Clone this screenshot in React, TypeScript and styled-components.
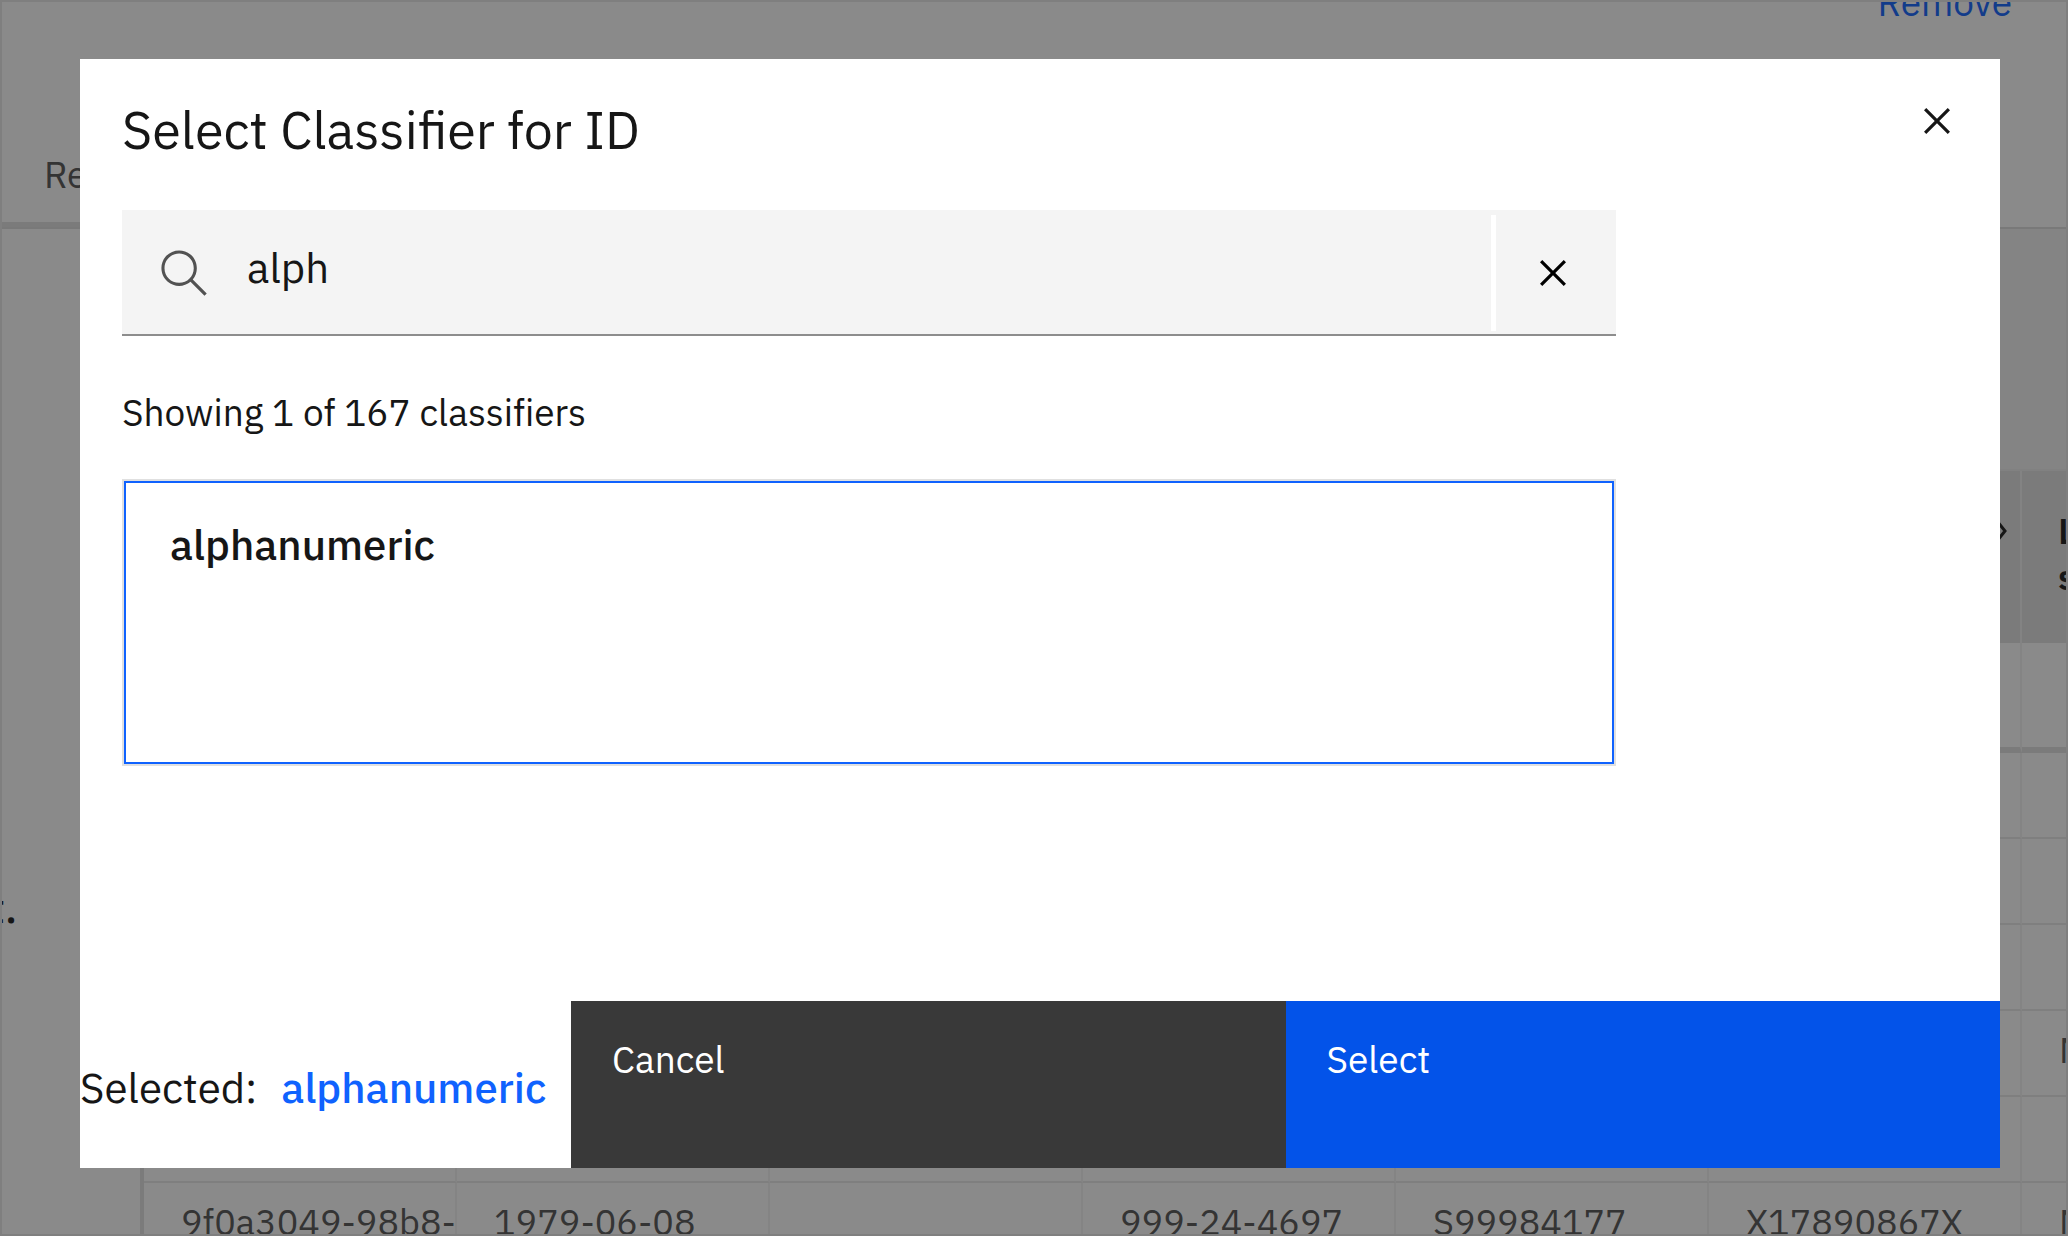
import React, { useState } from "react";
import styled, { createGlobalStyle } from "styled-components";

const color = {
  text: "#161616",
  textSoft: "#525252",
  layer: "#f4f4f4",
  line: "#e0e0e0",
  frame: "#e8e8e8",
  field: "#8d8d8d",
  blue: "#0f62fe",
  primary: "#0353e9",
  secondary: "#393939",
};

const GlobalStyle = createGlobalStyle`
  *, *::before, *::after { box-sizing: border-box; }
  body {
    margin: 0;
    color: ${color.text};
    font-family: "IBM Plex Sans", "Noto Sans", sans-serif;
    font-size: 37px;
    line-height: 48px;
  }
  button, input { font: inherit; color: inherit; border: 0; border-radius: 0; }
`;

const Page = styled.div`
  display: flex;
  flex-direction: column;
  height: 100vh;
  overflow: hidden;
  border: 2px solid ${color.frame};
  background: #fff;
`;

const PageHeader = styled.header`
  display: flex;
  flex: none;
  flex-direction: column;
  justify-content: space-between;
  height: 227px;
  border-bottom: 2px solid #dcdcdc;
`;

const HeaderActions = styled.div`
  display: flex;
  justify-content: flex-end;
  height: 24px;
  padding-right: 54px;
  align-items: flex-end;
`;

const RemoveLink = styled.a`
  color: ${color.blue};
  text-decoration: none;
`;

const Tab = styled.a`
  align-self: flex-start;
  padding: 0 42px 24px;
  color: ${color.textSoft};
  text-decoration: none;
  border-bottom: 5px solid ${color.line};
`;

const Columns = styled.div`
  display: flex;
  flex: 1;
  min-height: 0;
`;

const Sidebar = styled.aside`
  flex: none;
  display: flex;
  flex-direction: column;
  justify-content: flex-end;
  width: 138px;
  padding: 0 123px 298px 0;
`;

const SidebarNote = styled.p`
  display: flex;
  justify-content: flex-end;
  margin: 0;
  font-size: 42px;
  font-weight: 500;
  line-height: 56px;
  white-space: nowrap;
`;

const Content = styled.main`
  flex: 1;
  min-width: 0;
  overflow: hidden;
  padding-top: 240px;
  border-left: 4px solid ${color.line};
  background: #f3f3f3;
`;

const Table = styled.table`
  table-layout: fixed;
  width: 2191px;
  border-collapse: separate;
  border-spacing: 0;
  border-top: 2px solid #ececec;
  background: #fff;
  color: ${color.textSoft};
  font-size: 36px;
`;

const HeadCell = styled.th`
  width: 313px;
  height: 172px;
  padding: 0 36px 6px;
  background: ${color.line};
  border-right: 2px solid #f0f0f0;
  color: ${color.text};
  font-weight: 600;
  line-height: 46px;
  text-align: left;
  white-space: nowrap;
`;

const SortLabel = styled.span`
  display: flex;
  justify-content: flex-end;
  margin: 0 -28px 46px 0;
`;

const FilterCell = styled.td`
  height: 110px;
  padding: 0;
  border-right: 2px solid #f3f3f3;
  border-bottom: 6px solid ${color.line};
`;

const Cell = styled.td`
  height: 86px;
  padding: 0 37px 6px;
  border-right: 2px solid #f3f3f3;
  border-bottom: 2px solid #e8e8e8;
  white-space: nowrap;
`;

const Overlay = styled.div`
  position: fixed;
  inset: 0;
  display: flex;
  padding: 59px 68px 68px 80px;
  background: rgba(22, 22, 22, 0.5);
`;

const Modal = styled.section`
  display: flex;
  flex: 1;
  flex-direction: column;
  background: #fff;
`;

const ModalHeader = styled.header`
  display: flex;
  align-items: flex-start;
  justify-content: space-between;
  padding: 36px 37px 0 42px;
`;

const Title = styled.h2`
  margin: 0;
  font-size: 52px;
  font-weight: 400;
  line-height: 70px;
`;

const IconButton = styled.button`
  display: flex;
  align-items: center;
  justify-content: center;
  width: 52px;
  height: 52px;
  padding: 0;
  background: transparent;
`;

const ModalBody = styled.div`
  display: flex;
  flex: 1;
  flex-direction: column;
  padding: 45px 20% 0 42px;
`;

const SearchBox = styled.div`
  display: flex;
  align-items: center;
  height: 126px;
  padding: 2px 0 0 36px;
  background: ${color.layer};
  border-bottom: 2px solid ${color.field};
`;

const SearchInput = styled.input`
  flex: 1;
  min-width: 0;
  padding: 0 0 10px 37px;
  background: transparent;
  font-size: 42px;
  line-height: 56px;
  outline: none;
`;

const ClearButton = styled(IconButton)`
  width: 125px;
  height: 116px;
  padding-right: 7px;
  border-left: 5px solid #fff;
  color: #000;
`;

const ResultCount = styled.p`
  margin: 52px 0 43px;
  font-variant-ligatures: none;
`;

const ResultList = styled.div`
  height: 287px;
  border: 2px solid ${color.line};
`;

const ResultItem = styled.button`
  display: block;
  width: 100%;
  height: 100%;
  padding: 0 44px 156px;
  background: #fff;
  border: 2px solid ${color.blue};
  font-size: 42px;
  font-weight: 500;
  line-height: 56px;
  text-align: left;
`;

const ModalFooter = styled.footer`
  display: flex;
  height: 167px;
`;

const Selected = styled.div`
  display: flex;
  flex: none;
  align-items: center;
  gap: 24px;
  width: 491px;
  padding-top: 6px;
  font-size: 42px;
  line-height: 56px;
`;

const SelectedName = styled.strong`
  color: ${color.blue};
  font-weight: 500;
`;

const ActionButton = styled.button<{ $primary?: boolean }>`
  flex: 1;
  padding: 0 41px 52px;
  background: ${(p) => (p.$primary ? color.primary : color.secondary)};
  color: #fff;
  text-align: left;
`;

const CloseIcon = () => (
  <svg width="52" height="52" viewBox="0 0 32 32" fill="currentColor" aria-hidden="true">
    <path d="M24 9.4L22.6 8 16 14.6 9.4 8 8 9.4 14.6 16 8 22.6 9.4 24 16 17.4 22.6 24 24 22.6 17.4 16 24 9.4z" />
  </svg>
);

const SearchIcon = () => (
  <svg width="52" height="52" viewBox="0 0 16 16" fill={color.textSoft} aria-hidden="true">
    <path d="M15,14.3L10.7,10c1.9-2.3,1.6-5.8-0.7-7.7S4.2,0.7,2.3,3S0.7,8.8,3,10.7c2,1.7,5,1.7,7,0l4.3,4.3L15,14.3z M2,6.5C2,4,4,2,6.5,2S11,4,11,6.5S9,11,6.5,11S2,9,2,6.5z" />
  </svg>
);

const ChevronIcon = () => (
  <svg width="32" height="32" viewBox="0 0 32 32" fill="none" stroke="currentColor" strokeWidth="3" aria-hidden="true">
    <path d="M17 6l8 10-8 10" />
  </svg>
);

const columns = ["", "", "", "", "", "sort", "Ls"];
const rows = [
  ["", "", "", "", "", "", ""],
  ["", "", "", "", "", "", ""],
  ["", "", "", "", "", "", ""],
  ["", "", "", "", "", "", "N"],
  ["", "", "", "", "", "", ""],
  ["9f0a3049-98b8-", "1979-06-08", "", "999-24-4697", "S99984177", "X17890867X", "N"],
];

export default function App() {
  const [query, setQuery] = useState("alph");
  return (
    <>
      <GlobalStyle />
      <Page>
        <PageHeader>
          <HeaderActions>
            <RemoveLink href="#remove">Remove</RemoveLink>
          </HeaderActions>
          <Tab href="#re">Re</Tab>
        </PageHeader>
        <Columns>
          <Sidebar>
            <SidebarNote>t.</SidebarNote>
          </Sidebar>
          <Content>
            <Table>
              <thead>
                <tr>
                  {columns.map((name, i) => (
                    <HeadCell key={i}>
                      {name === "sort" && (
                        <SortLabel>
                          <ChevronIcon />
                        </SortLabel>
                      )}
                      {name === "Ls" && (
                        <>
                          L<br />s
                        </>
                      )}
                    </HeadCell>
                  ))}
                </tr>
              </thead>
              <tbody>
                <tr>
                  {columns.map((_, i) => (
                    <FilterCell key={i} />
                  ))}
                </tr>
                {rows.map((row, r) => (
                  <tr key={r}>
                    {row.map((value, i) => (
                      <Cell key={i}>{value}</Cell>
                    ))}
                  </tr>
                ))}
              </tbody>
            </Table>
          </Content>
        </Columns>
      </Page>
      <Overlay>
        <Modal role="dialog" aria-modal="true" aria-labelledby="modal-title">
          <ModalHeader>
            <Title id="modal-title">Select Classifier for ID</Title>
            <IconButton type="button" aria-label="Close">
              <CloseIcon />
            </IconButton>
          </ModalHeader>
          <ModalBody>
            <SearchBox>
              <SearchIcon />
              <SearchInput
                type="text"
                aria-label="Search classifiers"
                value={query}
                onChange={(e) => setQuery(e.target.value)}
              />
              <ClearButton type="button" aria-label="Clear search" onClick={() => setQuery("")}>
                <CloseIcon />
              </ClearButton>
            </SearchBox>
            <ResultCount>Showing 1 of 167 classifiers</ResultCount>
            <ResultList>
              <ResultItem type="button">alphanumeric</ResultItem>
            </ResultList>
          </ModalBody>
          <ModalFooter>
            <Selected>
              <span>Selected:</span>
              <SelectedName>alphanumeric</SelectedName>
            </Selected>
            <ActionButton type="button">Cancel</ActionButton>
            <ActionButton type="button" $primary>
              Select
            </ActionButton>
          </ModalFooter>
        </Modal>
      </Overlay>
    </>
  );
}
